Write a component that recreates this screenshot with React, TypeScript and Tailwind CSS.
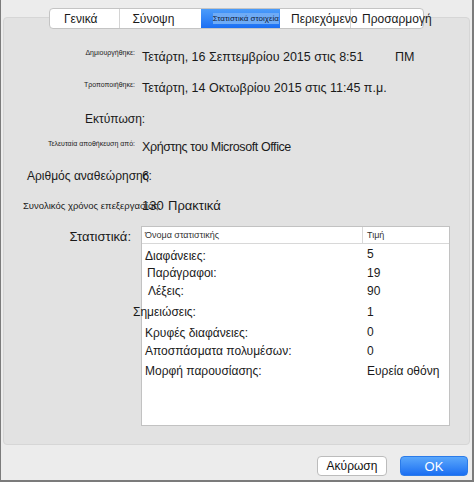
const tabs = [
  { label: "Γενικά", cls: "w-[71px] pl-[14px] border-r border-[#d4d4d4]" },
  { label: "Σύνοψη", cls: "w-[81px] pl-[12px]" },
  { label: "Στατιστικά στοιχεία", cls: "w-[80px]", active: true },
  { label: "Περιεχόμενο", cls: "w-[71px] pl-[11px] border-r border-[#d4d4d4]" },
  { label: "Προσαρμογή", cls: "w-[72px] pl-[11px]" },
];

const stats = [
  { name: "Διαφάνειες:", value: "5", row: "h-[17px]", pad: "pl-[3px]", vpad: "-mt-[2px]" },
  { name: "Παράγραφοι:", value: "19", row: "h-[18px]", pad: "pl-[5px]", vpad: "mt-0" },
  { name: "Λέξεις:", value: "90", row: "h-[21px]", pad: "pl-[6px]", vpad: "mt-0" },
  { name: "Σημειώσεις:", value: "1", row: "h-[21px]", pad: "-ml-[9px]", vpad: "mt-0" },
  { name: "Κρυφές διαφάνειες:", value: "0", row: "h-[18px]", pad: "pl-[3px]", vpad: "-mt-[1px]" },
  { name: "Αποσπάσματα πολυμέσων:", value: "0", row: "h-[20px]", pad: "pl-[3px]", vpad: "mt-0" },
  { name: "Μορφή παρουσίασης:", value: "Ευρεία οθόνη", row: "h-[20px]", pad: "pl-[3px]", vpad: "mt-0" },
];

function TinyLabel({ children }: { children: string }) {
  return (
    <div className="w-[138px] shrink-0 flex justify-end pr-[7px] pt-[1px] text-[7px] leading-[8px] whitespace-nowrap text-[#222]">
      {children}
    </div>
  );
}

export default function App() {
  return (
    <div className="w-[474px] h-[482px] bg-[#ececec] border-l border-r-2 border-b-2 border-[#7b7b7b] flex flex-col font-['Liberation_Sans',Arial,sans-serif] text-[#1a1a1a] overflow-hidden">
      {/* segmented tabs */}
      <div className="relative z-10 mt-[8px] ml-[48px] flex h-[21px] w-[375px] rounded-[4px] border border-[#c4c4c4] bg-white">
        {tabs.map((t) =>
          t.active ? (
            <div
              key={t.label}
              className={`${t.cls} h-full pl-[12px] pt-[4px] bg-gradient-to-b from-[#4b9cfa] to-[#1b6ff3]`}
            >
              <span className="block w-fit bg-[#6eabf6] text-[8px] leading-[11px] whitespace-nowrap text-[#10203a]">
                {t.label}
              </span>
            </div>
          ) : (
            <div key={t.label} className={`${t.cls} h-full pt-[3px] text-[12px] leading-[14px] whitespace-nowrap`}>
              {t.label}
            </div>
          )
        )}
      </div>

      {/* properties panel */}
      <div className="-mt-[12px] ml-[2px] w-[467px] h-[428px] rounded-[4px] border border-[#d6d6d6] bg-[#e2e2e2] pt-[30px] flex flex-col text-[12.5px] leading-[15px]">
        <div className="flex h-[32px] items-start">
          <TinyLabel>Δημιουργήθηκε:</TinyLabel>
          <div className="pt-[2px] flex whitespace-nowrap">
            <span className="w-[253px]">Τετάρτη, 16 Σεπτεμβρίου 2015 στις 8:51</span>
            <span>ΠΜ</span>
          </div>
        </div>

        <div className="flex h-[32px] items-start">
          <TinyLabel>Τροποποιήθηκε:</TinyLabel>
          <div className="pt-[1px] whitespace-nowrap">Τετάρτη, 14 Οκτωβρίου 2015 στις 11:45 π.μ.</div>
        </div>

        <div className="flex h-[27px] items-start">
          <div className="w-[138px] shrink-0 pl-[81px] text-[12px] leading-[14px] whitespace-nowrap">Εκτύπωση:</div>
        </div>

        <div className="flex h-[29px] items-start">
          <TinyLabel>Τελευταία αποθήκευση από:</TinyLabel>
          <div className="pt-[1px] whitespace-nowrap tracking-[-0.4px]">Χρήστης του Microsoft Office</div>
        </div>

        <div className="flex h-[30px] items-start">
          <div className="w-[138px] shrink-0 pl-[23px] pt-[1px] text-[12px] leading-[14px] whitespace-nowrap">Αριθμός αναθεώρησης:</div>
          <div className="text-[13px]">6</div>
        </div>

        <div className="flex h-[28px] items-start">
          <div className="w-[138px] shrink-0 pl-[19px] pt-[2px] text-[9.5px] leading-[12px] whitespace-nowrap">
            Συνολικός χρόνος επεξεργασίας:
          </div>
          <div className="flex whitespace-nowrap text-[13px]">
            <span className="w-[26px]">130</span>
            <span>Πρακτικά</span>
          </div>
        </div>

        <div className="flex items-start">
          <div className="w-[137px] shrink-0 flex justify-end pr-[10px] pt-[3px] text-[13px] whitespace-nowrap">Στατιστικά:</div>
          <div className="w-[309px] h-[200px] border border-[#c2c2c2] bg-white">
            <div className="flex h-[17px] border-b border-[#d8d8d8] text-[9px] leading-[11px] text-[#333]">
              <div className="w-[221px] pl-[3px] pt-[3px] border-r border-[#d8d8d8]">Όνομα στατιστικής</div>
              <div className="pl-[4px] pt-[3px]">Τιμή</div>
            </div>
            <div className="pt-[5px] text-[12px] leading-[14px]">
              {stats.map((s) => (
                <div key={s.name} className={`flex ${s.row}`}>
                  <div className="w-[221px] whitespace-nowrap">
                    <span className={`block ${s.pad}`}>{s.name}</span>
                  </div>
                  <div className={`pl-[4px] whitespace-nowrap ${s.vpad}`}>{s.value}</div>
                </div>
              ))}
            </div>
          </div>
        </div>
      </div>

      {/* dialog buttons */}
      <div className="mt-[11px] flex justify-end gap-[13px] pr-[4px]">
        <button className="w-[70px] h-[20px] rounded-[4px] border border-[#bcbcbc] bg-white text-[12px] leading-[14px] text-[#111]">
          Ακύρωση
        </button>
        <button className="w-[68px] h-[20px] rounded-[4px] border border-[#2b7be9] bg-gradient-to-b from-[#5aa7fb] to-[#1a6ef2] text-[13px] leading-[15px] text-white">
          OK
        </button>
      </div>
    </div>
  );
}
